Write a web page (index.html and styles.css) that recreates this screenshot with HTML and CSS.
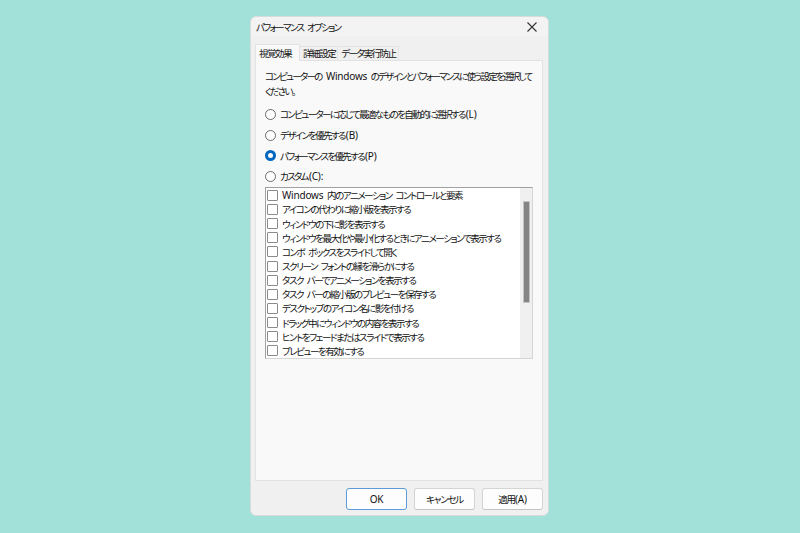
FILE: index.html
```html
<!DOCTYPE html>
<html lang="ja">
<head>
    <meta charset="UTF-8">
    <title>パフォーマンス オプション</title>
    <link rel="stylesheet" href="styles.css">
</head>
<body>
    <div class="dialog">
        <div class="titlebar">
            <span class="title">パフォーマンス オプション</span>
            <span class="close">
                <svg width="10" height="10" viewBox="0 0 10 10"><path d="M0.5 0.5L9.5 9.5M9.5 0.5L0.5 9.5" stroke="#333" stroke-width="1.1"/></svg>
            </span>
        </div>

        <div class="tabs">
            <div class="tab active">視覚効果</div>
            <div class="tab">詳細設定</div>
            <div class="tab">データ実行防止</div>
        </div>

        <div class="panel">
            <p class="desc">コンピューターの <span class="lat">Windows</span> のデザインとパフォーマンスに使う設定を選択して<br>ください。</p>

            <label class="radio"><span class="dot"></span>コンピューターに応じて最適なものを自動的に選択する<span class="lat">(L)</span></label>
            <label class="radio"><span class="dot"></span>デザインを優先する<span class="lat">(B)</span></label>
            <label class="radio"><span class="dot checked"></span>パフォーマンスを優先する<span class="lat">(P)</span></label>
            <label class="radio"><span class="dot"></span>カスタム<span class="lat">(C):</span></label>

            <div class="listbox">
                <ul class="items">
                    <li><span class="box"></span><span class="lat">Windows</span>&nbsp;内のアニメーション コントロールと要素</li>
                    <li><span class="box"></span>アイコンの代わりに縮小版を表示する</li>
                    <li><span class="box"></span>ウィンドウの下に影を表示する</li>
                    <li><span class="box"></span>ウィンドウを最大化や最小化するときにアニメーションで表示する</li>
                    <li><span class="box"></span>コンボ ボックスをスライドして開く</li>
                    <li><span class="box"></span>スクリーン フォントの縁を滑らかにする</li>
                    <li><span class="box"></span>タスク バーでアニメーションを表示する</li>
                    <li><span class="box"></span>タスク バーの縮小版のプレビューを保存する</li>
                    <li><span class="box"></span>デスクトップのアイコン名に影を付ける</li>
                    <li><span class="box"></span>ドラッグ中にウィンドウの内容を表示する</li>
                    <li><span class="box"></span>ヒントをフェードまたはスライドで表示する</li>
                    <li><span class="box"></span>プレビューを有効にする</li>
                </ul>
                <div class="scrollbar"><div class="thumb"></div></div>
            </div>
        </div>

        <div class="footer">
            <button class="btn default"><span class="lat">OK</span></button>
            <button class="btn">キャンセル</button>
            <button class="btn">適用<span class="lat">(A)</span></button>
        </div>
    </div>
</body>
</html>
```

FILE: styles.css
```css
/* General */
body {
    margin: 0;
    padding: 0;
    width: 800px;
    height: 533px;
    background-color: #a2e1d9;
    font-family: "Noto Sans CJK JP", "Noto Sans", sans-serif;
    font-size: 9.5px;
    font-feature-settings: "palt";
    letter-spacing: -1.45px;
    word-spacing: 3px;
    color: #111;
    display: flex;
    justify-content: center;
    align-items: flex-start;
}

.lat {
    letter-spacing: -0.2px;
    word-spacing: 0;
    font-family: "Noto Sans", sans-serif;
    font-size: 10px;
    line-height: 1;
    margin-left: 1px;
}

.dialog {
    margin-top: 16px;
    margin-left: -1px;
    width: 299px;
    height: 500px;
    box-sizing: border-box;
    background-color: #f0f0f0;
    border: 1px solid #d6dcdc;
    border-radius: 6px;
    display: flex;
    flex-direction: column;
}

/* Title bar */
.titlebar {
    height: 19px;
    padding: 0 6px 0 5px;
    display: flex;
    justify-content: space-between;
    align-items: center;
    background-color: #f3f3f3;
    border-radius: 6px 6px 0 0;
}

.title {
    letter-spacing: -1.65px;
}

.close {
    width: 20px;
    display: flex;
    justify-content: center;
    padding-top: 1px;
}

/* Tabs */
.tabs {
    display: flex;
    margin: 8px 0 0 4px;
    height: 16px;
    align-items: flex-end;
}

.tab {
    padding: 0 2px 0 3px;
    height: 13px;
    line-height: 13px;
    background-color: #f0f0f0;
    border: 1px solid #e4e4e4;
    border-bottom: none;
    border-left: none;
}

.tab.active {
    height: 16px;
    line-height: 16px;
    padding: 0 3px 0 3px;
    width: 37px;
    background-color: #f9f9f9;
    border: 1px solid #e2e2e2;
    border-bottom: none;
    position: relative;
    z-index: 1;
    margin-bottom: -1px;
}

/* Panel */
.panel {
    flex: 1;
    margin: 0 5px 0 4px;
    background-color: #f9f9f9;
    border: 1px solid #e2e2e2;
    padding: 8px 9px 0 9px;
}

.desc {
    margin: 0 0 5px 0;
    line-height: 15px;
    white-space: nowrap;
    letter-spacing: -1.75px;
}

.radio {
    display: flex;
    align-items: center;
    height: 20.7px;
    letter-spacing: -1.65px;
}

.dot {
    width: 9px;
    height: 9px;
    border: 1px solid #6b6b6b;
    border-radius: 50%;
    margin-right: 4px;
    background-color: #fdfdfd;
}

.dot.checked {
    border: 3px solid #0067c0;
    width: 5px;
    height: 5px;
    background-color: #fff;
}

/* List box */
.listbox {
    height: 172px;
    box-sizing: border-box;
    border: 1px solid #a0a0a0;
    border-right-color: #d5d5d5;
    border-bottom-color: #d5d5d5;
    background-color: #fff;
    display: flex;
    overflow: hidden;
}

.items {
    list-style: none;
    margin: 0;
    padding: 0.5px 0 0 1px;
    flex: 1;
    min-width: 0;
    overflow: hidden;
}

.items li {
    height: 14.15px;
    display: flex;
    align-items: center;
    white-space: nowrap;
}

.items .lat {
    margin-left: 0;
}

.box {
    width: 9px;
    height: 9px;
    border: 1px solid #8a8a8a;
    border-radius: 1px;
    margin-right: 4px;
    background-color: #fff;
    flex: none;
}

.scrollbar {
    width: 12px;
    flex: none;
    background-color: #f0f0f0;
    display: flex;
    justify-content: center;
    padding-top: 13px;
    box-sizing: border-box;
}

.thumb {
    width: 7px;
    height: 102px;
    background-color: #858585;
    border: 1px solid #c4c4c4;
    box-sizing: border-box;
}

/* Footer */
.footer {
    height: 34px;
    display: flex;
    justify-content: flex-end;
    align-items: flex-start;
    gap: 7px;
    padding: 7px 5px 0 0;
    box-sizing: border-box;
}

.btn {
    width: 61px;
    height: 22px;
    font-family: inherit;
    font-size: 9.5px;
    font-feature-settings: "palt";
    letter-spacing: -1.2px;
    color: #111;
    background-color: #fdfdfd;
    border: 1px solid #d4d4d4;
    border-bottom-color: #c4c4c4;
    border-radius: 3px;
    padding: 0;
}

.btn .lat {
    margin-left: 0;
}

.btn.default {
    border: 1px solid #5a9bd8;
    box-shadow: inset 0 0 0 1px #fff;
}
```
